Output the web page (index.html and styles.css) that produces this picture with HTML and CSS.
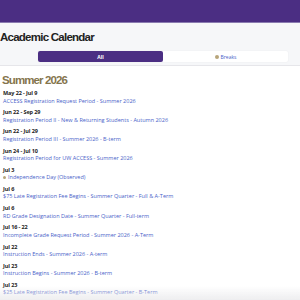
FILE: index.html
```html
<!DOCTYPE html>
<html lang="en">
<head>
    <meta charset="UTF-8">
    <meta name="viewport" content="width=device-width, initial-scale=1.0">
    <title>Academic Calendar</title>
    <link rel="stylesheet" href="styles.css">
</head>
<body>
    <header class="top-bar"></header>

    <section class="intro">
        <h1>Academic Calendar</h1>
        <div class="tabs">
            <button class="tab active">All</button>
            <button class="tab"><span class="dot"></span>Breaks</button>
        </div>
    </section>

    <main class="calendar">
        <h2>Summer 2026</h2>

        <div class="event">
            <div class="date">May 22 - Jul 9</div>
            <a href="#">ACCESS Registration Request Period - Summer 2026</a>
        </div>
        <div class="event">
            <div class="date">Jun 22 - Sep 29</div>
            <a href="#">Registration Period II - New &amp; Returning Students - Autumn 2026</a>
        </div>
        <div class="event">
            <div class="date">Jun 22 - Jul 29</div>
            <a href="#">Registration Period III - Summer 2026 - B-term</a>
        </div>
        <div class="event">
            <div class="date">Jun 24 - Jul 10</div>
            <a href="#">Registration Period for UW ACCESS - Summer 2026</a>
        </div>
        <div class="event">
            <div class="date">Jul 3</div>
            <a href="#"><span class="dot"></span>Independence Day (Observed)</a>
        </div>
        <div class="event">
            <div class="date">Jul 6</div>
            <a href="#">$75 Late Registration Fee Begins - Summer Quarter - Full &amp; A-Term</a>
        </div>
        <div class="event">
            <div class="date">Jul 6</div>
            <a href="#">RD Grade Designation Date - Summer Quarter - Full-term</a>
        </div>
        <div class="event">
            <div class="date">Jul 16 - 22</div>
            <a href="#">Incomplete Grade Request Period - Summer 2026 - A-Term</a>
        </div>
        <div class="event">
            <div class="date">Jul 22</div>
            <a href="#">Instruction Ends - Summer 2026 - A-term</a>
        </div>
        <div class="event">
            <div class="date">Jul 23</div>
            <a href="#">Instruction Begins - Summer 2026 - B-term</a>
        </div>
        <div class="event">
            <div class="date">Jul 23</div>
            <a href="#">$25 Late Registration Fee Begins - Summer Quarter - B-Term</a>
        </div>
    </main>

    <div class="fade"></div>
</body>
</html>
```

FILE: styles.css
```css
body {
    font-family: "Open Sans", "Liberation Sans", sans-serif;
    margin: 0;
    padding: 0;
    background-color: #fff;
    overflow: hidden;
}

.top-bar {
    height: 22px;
    background-color: #4b2e83;
    border-bottom: 1px solid #8a7bb0;
}

.intro {
    background-color: #f6f7f9;
    border-bottom: 1px solid #e6e6ea;
    padding: 7px 0 3px 0;
}

h1 {
    font-family: "Liberation Sans", Arial, sans-serif;
    font-size: 11.5px;
    font-weight: 700;
    letter-spacing: -0.75px;
    color: #222;
    margin: 0 0 7px 0;
    line-height: 14px;
}

.tabs {
    display: flex;
    margin: 0 12px 0 38px;
    background-color: #fff;
    border-radius: 2px;
    box-shadow: 0 0 2px rgba(0,0,0,0.06);
    height: 11px;
}

.tab {
    flex: 1;
    border: none;
    background: none;
    padding: 0;
    font-family: inherit;
    font-size: 5px;
    color: #4a5fc9;
    display: flex;
    align-items: center;
    justify-content: center;
    border-radius: 2px;
}

.tab.active {
    background-color: #4b2e83;
    color: #fff;
    font-weight: 700;
}

.dot {
    display: inline-block;
    width: 4px;
    height: 4px;
    border-radius: 50%;
    background-color: #b7a57a;
    margin-right: 2px;
}

.calendar {
    padding: 6px 0 0 3px;
}

h2 {
    font-family: "Liberation Sans", Arial, sans-serif;
    font-size: 11.5px;
    font-weight: 700;
    letter-spacing: -0.9px;
    color: #85754d;
    margin: 0 0 2px -1px;
    line-height: 16px;
}

.event {
    margin-bottom: 4.2px;
    white-space: nowrap;
}

.date {
    font-size: 5.5px;
    font-weight: 700;
    letter-spacing: -0.1px;
    color: #222;
    line-height: 7.5px;
}

.event a {
    display: block;
    font-size: 5.5px;
    color: #4a5fc9;
    text-decoration: none;
    line-height: 7.5px;
}

.event a .dot {
    width: 3px;
    height: 3px;
    margin-right: 2px;
    vertical-align: middle;
}

.fade {
    position: fixed;
    left: 0;
    right: 0;
    bottom: 0;
    height: 14px;
    background: linear-gradient(rgba(240,240,240,0), rgba(236,236,238,0.9));
}
```
